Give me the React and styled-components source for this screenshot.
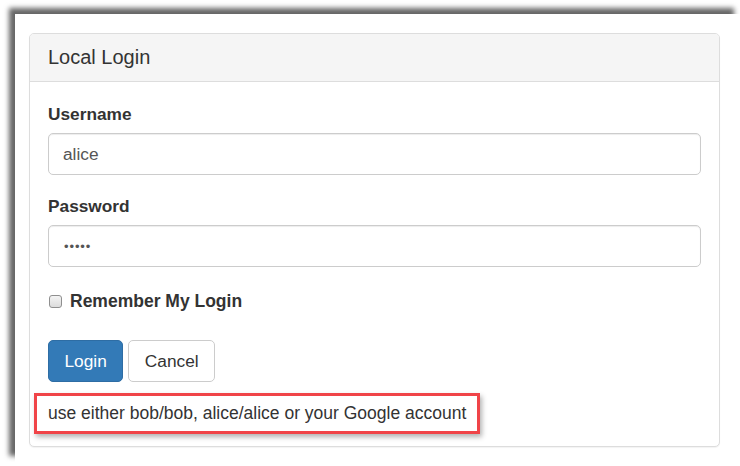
import React from 'react';
import styled, { createGlobalStyle } from 'styled-components';

const GlobalStyle = createGlobalStyle`
  html, body {
    margin: 0;
    padding: 0;
    background: #fff;
    overflow: hidden;
  }
  body {
    font-family: "Liberation Sans", Arial, Helvetica, sans-serif;
    color: #333;
  }
`;

const Page = styled.div`
  margin: 14px 0 0 15px;
  width: 725px;
  height: 448px;
  padding-top: 19px;
  padding-left: 14px;
  box-sizing: border-box;
  background: #fff;
  box-shadow: -6px -6px 5px rgba(0, 0, 0, 0.6);
`;

const Panel = styled.div`
  width: 691px;
  box-sizing: border-box;
  border: 1px solid #ddd;
  border-radius: 5px;
  background: #fff;
  box-shadow: 0 1px 1px rgba(0, 0, 0, 0.05);
`;

const PanelHeading = styled.div`
  height: 47px;
  line-height: 47px;
  padding: 0 18px;
  background: #f5f5f5;
  border-bottom: 1px solid #ddd;
  border-radius: 4px 4px 0 0;
  font-size: 20px;
  color: #333;
`;

const PanelBody = styled.div`
  padding: 22px 18px 12px;
`;

const Label = styled.div`
  font-weight: bold;
  font-size: 17.3px;
  line-height: 20px;
  margin-bottom: 9px;
`;

const Field = styled.div`
  height: 42px;
  box-sizing: border-box;
  border: 1px solid #ccc;
  border-radius: 5px;
  padding: 0 14px;
  display: flex;
  align-items: center;
  font-size: 17.3px;
  color: #555;
  margin-bottom: ${p => p.$gap || 21}px;
  box-shadow: inset 0 1px 1px rgba(0, 0, 0, 0.075);
`;

const Dots = styled.span`
  font-size: 13px;
  letter-spacing: 0.9px;
  color: #555;
  padding-left: 1px;
`;

const CheckRow = styled.div`
  display: flex;
  align-items: center;
  height: 20px;
  margin-bottom: 29px;
  font-size: 17.5px;
  font-weight: bold;
`;

const CheckBox = styled.span`
  width: 11px;
  height: 11px;
  margin: 0 8px 0 1px;
  border: 1px solid #8f8f8f;
  border-radius: 3px;
  background: linear-gradient(#f4f4f4, #dcdcdc);
`;

const Buttons = styled.div`
  display: flex;
  gap: 5px;
  margin-bottom: 11px;
`;

const Button = styled.div`
  height: 42px;
  box-sizing: border-box;
  padding: 0 15.5px;
  display: flex;
  align-items: center;
  font-size: 17.3px;
  border-radius: 5px;
  border: 1px solid ${p => (p.$primary ? '#2e6da4' : '#ccc')};
  background: ${p => (p.$primary ? '#337ab7' : '#fff')};
  color: ${p => (p.$primary ? '#fff' : '#333')};
`;

const Hint = styled.div`
  display: inline-flex;
  align-items: center;
  height: 41px;
  box-sizing: border-box;
  margin-left: -14px;
  padding: 0 11px 0 11px;
  border: 3px solid #f04448;
  font-size: 17.5px;
  color: #333;
  box-shadow: 2px 3px 5px rgba(0, 0, 0, 0.3);
`;

export default function App() {
  return (
    <>
      <GlobalStyle />
      <Page>
        <Panel>
          <PanelHeading>Local Login</PanelHeading>
          <PanelBody>
            <Label>Username</Label>
            <Field>alice</Field>
            <Label>Password</Label>
            <Field $gap={24}>
              <Dots>•••••</Dots>
            </Field>
            <CheckRow>
              <CheckBox />
              Remember My Login
            </CheckRow>
            <Buttons>
              <Button $primary>Login</Button>
              <Button>Cancel</Button>
            </Buttons>
            <Hint>use either bob/bob, alice/alice or your Google account</Hint>
          </PanelBody>
        </Panel>
      </Page>
    </>
  );
}
